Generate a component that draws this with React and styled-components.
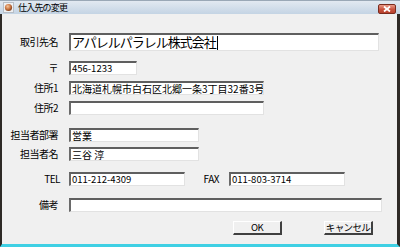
import React from "react";
import styled, { createGlobalStyle } from "styled-components";

const Global = createGlobalStyle`
  html, body { margin: 0; padding: 0; background: #f0f0f0; }
  body { font-family: "Noto Sans CJK JP", "DejaVu Sans", sans-serif; }
  * { box-sizing: border-box; }
`;

const Window = styled.div`
  width: 400px;
  height: 247px;
  display: flex;
  flex-direction: column;
  background: #f0f0f0;
  overflow: hidden;
`;

const TitleBar = styled.div`
  height: 14px;
  flex: none;
  display: flex;
  align-items: center;
  padding: 0 3px 0 3px;
  background: linear-gradient(#e2e9f1, #c4d4e4);
  border-top: 1px solid #9aa8b6;
`;

const TitleText = styled.span`
  margin-left: 4px;
  font-size: 9px;
  line-height: 12px;
  color: #000;
  flex: 1;
  letter-spacing: -0.8px;
`;

const CloseButton = styled.div`
  width: 18px;
  height: 10px;
  margin-right: 1px;
  margin-top: 2px;
  border: 1px solid #7a2b1e;
  border-radius: 2px;
  background: linear-gradient(#e99a88, #c9523e 55%, #b8402c);
  display: flex;
  align-items: center;
  justify-content: center;
`;

const Body = styled.div`
  flex: 1;
  border-left: 2px solid #2e2a26;
  border-right: 3px solid #2e2a26;
  border-bottom: 3px solid #3fd0e4;
  padding-top: 19px;
  display: flex;
  flex-direction: column;
`;

const Row = styled.div`
  display: flex;
  align-items: center;
  margin-top: ${(p) => p.$gap || 0}px;
`;

const Label = styled.div`
  width: ${(p) => p.$w || 56}px;
  margin-right: ${(p) => p.$mr ?? 11}px;
  text-align: right;
  font-size: 10px;
  letter-spacing: -0.5px;
  line-height: 12px;
  color: #000;
  white-space: nowrap;
`;

const Field = styled.div`
  width: ${(p) => p.$w}px;
  height: ${(p) => p.$h || 14}px;
  background: #fff;
  border-top: 2px solid #5f5f5f;
  border-left: 2px solid #6a6a6a;
  border-right: 1px solid #e2e2e2;
  border-bottom: 1px solid #e2e2e2;
  display: flex;
  align-items: center;
  padding-left: 1px;
  font-size: ${(p) => p.$fs || 10}px;
  letter-spacing: ${(p) => p.$ls || 0}px;
  line-height: 1.1;
  color: #000;
  white-space: nowrap;
  overflow: hidden;
`;

const Digits = styled.span`
  font-size: 9.5px;
`;

const Caret = styled.span`
  display: inline-block;
  width: 1px;
  height: 14px;
  background: #000;
  margin-left: 1px;
`;

const ButtonRow = styled.div`
  display: flex;
  justify-content: flex-end;
  gap: 42px;
  padding-right: 24px;
  margin-top: 9px;
`;

const Button = styled.div`
  width: 49px;
  height: 14px;
  background: #f0f0f0;
  border-top: 1px solid #ffffff;
  border-left: 1px solid #ffffff;
  border-right: 2px solid #404040;
  border-bottom: 2px solid #404040;
  display: flex;
  align-items: center;
  justify-content: center;
  font-size: 9.5px;
  letter-spacing: -0.6px;
  line-height: 1;
  color: #000;
  white-space: nowrap;
`;

function AppIcon() {
  return (
    <svg width="11" height="11" viewBox="0 0 11 11">
      <defs>
        <radialGradient id="g" cx="40%" cy="35%" r="60%">
          <stop offset="0" stopColor="#f3c7a0" />
          <stop offset="0.6" stopColor="#cf7a45" />
          <stop offset="1" stopColor="#8e4a25" />
        </radialGradient>
      </defs>
      <rect x="0.5" y="0.5" width="10" height="10" fill="#eef0f2" stroke="#b8bec6" />
      <circle cx="5.5" cy="5.5" r="3.6" fill="url(#g)" />
    </svg>
  );
}

function CloseX() {
  return (
    <svg width="8" height="6" viewBox="0 0 8 6">
      <path d="M1 0.5 L7 5.5 M7 0.5 L1 5.5" stroke="#fff" strokeWidth="1.8" />
    </svg>
  );
}

export default function App() {
  return (
    <>
      <Global />
      <Window>
        <TitleBar>
          <AppIcon />
          <TitleText>仕入先の変更</TitleText>
          <CloseButton>
            <CloseX />
          </CloseButton>
        </TitleBar>
        <Body>
          <Row>
            <Label>取引先名</Label>
            <Field $w={310} $h={18} $fs={13} $ls={-1}>
              アパレルパラレル株式会社<Caret />
            </Field>
          </Row>
          <Row $gap={10}>
            <Label>〒</Label>
            <Field $w={68}><Digits>456-1233</Digits></Field>
          </Row>
          <Row $gap={6}>
            <Label>住所1</Label>
            <Field $w={195}>北海道札幌市白石区北郷一条3丁目32番3号</Field>
          </Row>
          <Row $gap={6}>
            <Label>住所2</Label>
            <Field $w={195} />
          </Row>
          <Row $gap={13}>
            <Label>担当者部署</Label>
            <Field $w={130}>営業</Field>
          </Row>
          <Row $gap={5}>
            <Label>担当者名</Label>
            <Field $w={130}>三谷 淳</Field>
          </Row>
          <Row $gap={11}>
            <Label $w={58} $mr={9}>TEL</Label>
            <Field $w={116}><Digits>011-212-4309</Digits></Field>
            <Label $w={34} $mr={10}>FAX</Label>
            <Field $w={116}><Digits>011-803-3714</Digits></Field>
          </Row>
          <Row $gap={12}>
            <Label>備考</Label>
            <Field $w={313} />
          </Row>
          <ButtonRow>
            <Button>OK</Button>
            <Button>キャンセル</Button>
          </ButtonRow>
        </Body>
      </Window>
    </>
  );
}
